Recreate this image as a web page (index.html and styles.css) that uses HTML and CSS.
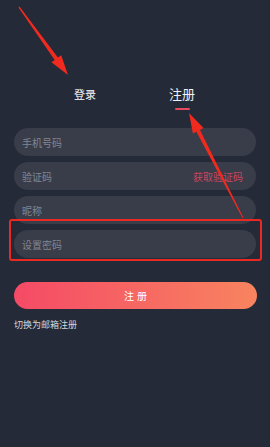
FILE: index.html
```html
<!DOCTYPE html>
<html lang="zh">
<head>
<meta charset="utf-8">
<link rel="stylesheet" href="styles.css">
</head>
<body>
<div class="page">
  <div class="tabs">
    <div class="tab">登录</div>
    <div class="tab active"><span class="tab-text">注册</span><span class="underline"></span></div>
  </div>
  <div class="form">
    <div class="field"><span class="ph">手机号码</span></div>
    <div class="field"><span class="ph">验证码</span><span class="code">获取验证码</span></div>
    <div class="field"><span class="ph">昵称</span></div>
    <div class="field"><span class="ph">设置密码</span></div>
  </div>
  <div class="btn">注册</div>
  <div class="switch">切换为邮箱注册</div>
  <svg class="overlay" width="270" height="447" viewBox="0 0 270 447">
    <rect x="10" y="220" width="251" height="40" rx="2" fill="none" stroke="#ea2a22" stroke-width="2"/>
    <polygon fill="#f02a1e" points="19.5,6.6 57.9,57.6 61.2,55.3 68,75 51.4,62.3 54.7,60.0 18.5,7.4"/>
    <polygon fill="#f02a1e" points="243.4,217.8 200.0,129.9 203.5,128.1 189,113 192.9,133.5 196.4,131.7 242.6,218.2"/>
  </svg>
</div>
</body>
</html>
```
FILE: styles.css
```css
html, body {
  margin: 0;
  padding: 0;
  background: #252a38;
}
.page {
  position: relative;
  width: 270px;
  height: 447px;
  overflow: hidden;
  font-family: "Noto Sans CJK SC", "Noto Sans", sans-serif;
  background: #252a38;
}
.tabs {
  display: flex;
  align-items: flex-start;
  gap: 73px;
  padding: 84px 0 0 74px;
}
.tab {
  font-size: 11px;
  line-height: 20px;
  color: #dcdde0;
  font-weight: 500;
}
.tab.active {
  display: flex;
  flex-direction: column;
  align-items: center;
  font-size: 13px;
  color: #f2f2f4;
  font-weight: 400;
}
.tab-text {
  line-height: 20px;
}
.underline {
  display: block;
  width: 15px;
  height: 2px;
  margin-top: 4px;
  background: #e9495f;
  border-radius: 1px;
}
.form {
  display: flex;
  flex-direction: column;
  gap: 6px;
  margin: 18px 14px 0 14px;
}
.field {
  height: 28px;
  border-radius: 14px;
  background: #393c49;
  display: flex;
  align-items: center;
  justify-content: space-between;
  padding: 0 13px 0 8px;
}
.ph {
  font-size: 10px;
  color: #83868f;
}
.code {
  font-size: 10px;
  color: #c9465f;
}
.btn {
  margin: 24px 13px 0 14px;
  height: 27px;
  border-radius: 14px;
  background: linear-gradient(90deg, #f54a66, #f8845f);
  color: #ffffff;
  font-size: 10px;
  letter-spacing: 3px;
  display: flex;
  align-items: center;
  justify-content: center;
  padding-left: 3px;
}
.switch {
  margin: 10px 0 0 14px;
  font-size: 9px;
  line-height: 12px;
  color: #d4d5d9;
}
.overlay {
  position: absolute;
  left: 0;
  top: 0;
  pointer-events: none;
}
```
